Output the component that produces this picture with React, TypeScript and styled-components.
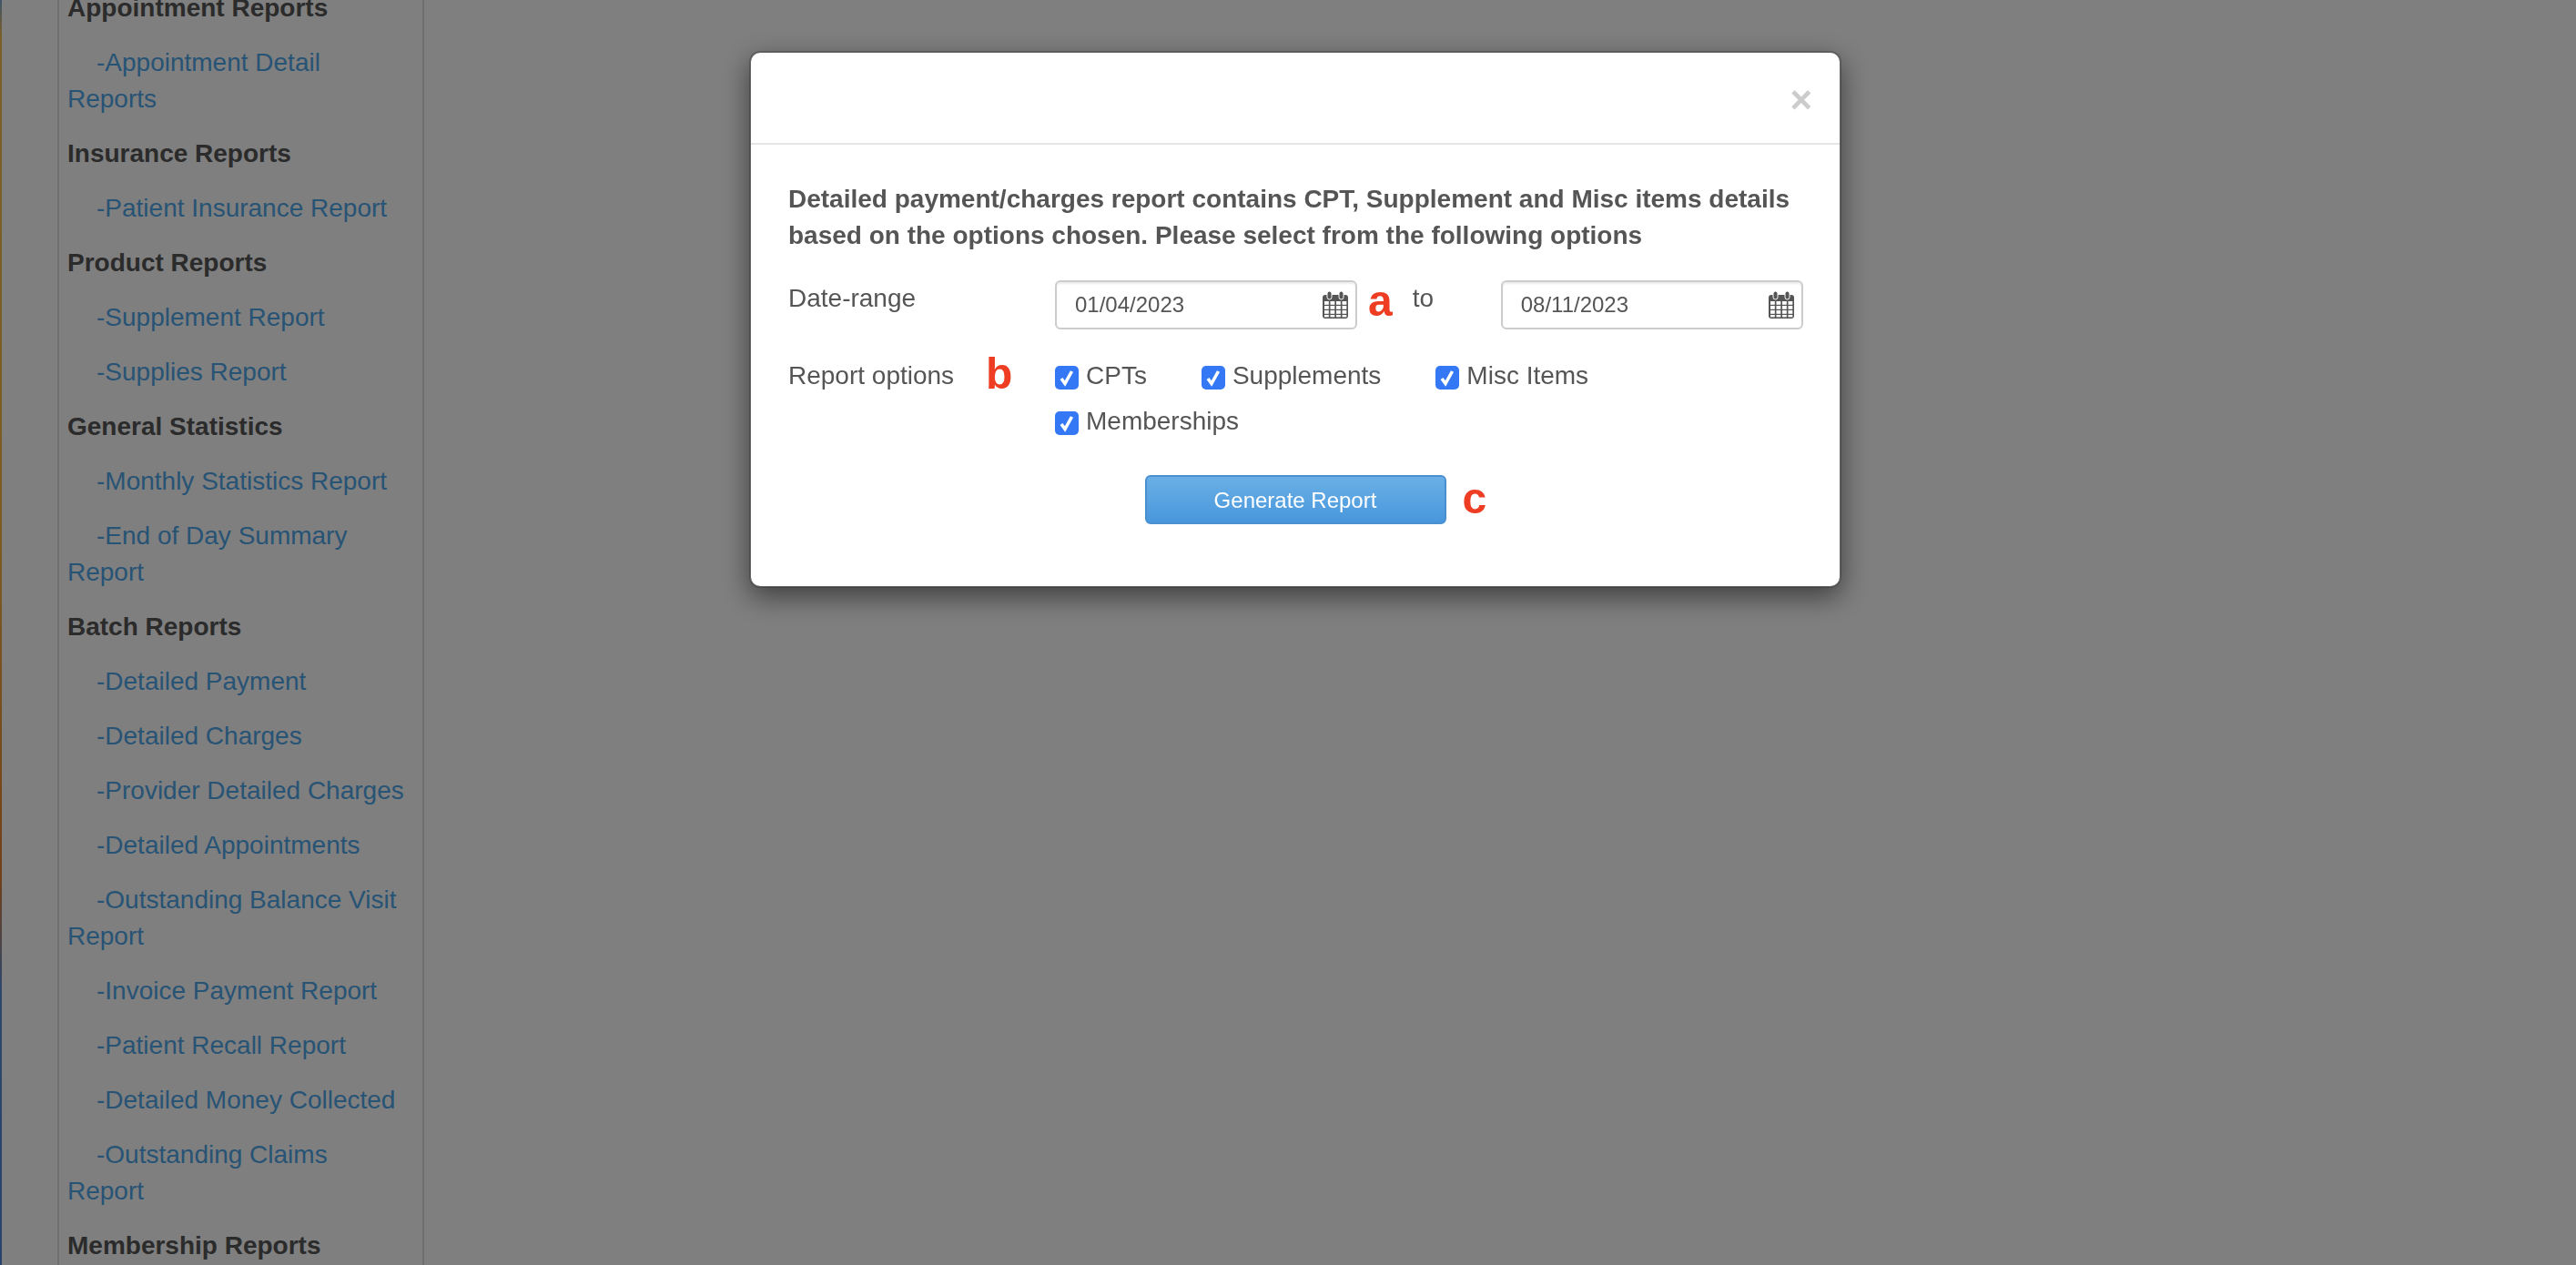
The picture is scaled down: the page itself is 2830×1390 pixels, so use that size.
import styled, { createGlobalStyle } from "styled-components";

const sections = [
  { title: "Appointment Reports", links: ["Appointment Detail Reports"] },
  { title: "Insurance Reports", links: ["Patient Insurance Report"] },
  { title: "Product Reports", links: ["Supplement Report", "Supplies Report"] },
  {
    title: "General Statistics",
    links: ["Monthly Statistics Report", "End of Day Summary Report"],
  },
  {
    title: "Batch Reports",
    links: [
      "Detailed Payment",
      "Detailed Charges",
      "Provider Detailed Charges",
      "Detailed Appointments",
      "Outstanding Balance Visit Report",
      "Invoice Payment Report",
      "Patient Recall Report",
      "Detailed Money Collected",
      "Outstanding Claims Report",
    ],
  },
  { title: "Membership Reports", links: [] },
];

const options = ["CPTs", "Supplements", "Misc Items", "Memberships"];

const GlobalStyle = createGlobalStyle`
  html, body {
    margin: 0;
    height: 100%;
    overflow: hidden;
    background: #fff;
    font-family: "Liberation Sans", Arial, sans-serif;
  }
  * { box-sizing: border-box; }
`;

const Page = styled.div`
  height: 1390px;
  overflow: hidden;
  padding-left: 63px;
`;

const Stripe = styled.div`
  position: fixed;
  left: 0;
  top: 0;
  bottom: 0;
  width: 2px;
  background: linear-gradient(
    to bottom,
    #7fa6d6 0,
    #f4c04e 40px,
    #f6b544 600px,
    #f09a3c 800px,
    #e77f2e 960px,
    #5b8fd8 1090px,
    #4f87d6 1390px
  );
`;

const Sidebar = styled.nav`
  width: 403px;
  min-height: 1420px;
  margin-top: -11px;
  padding: 0 18px 0 9px;
  border-left: 2px solid #dedede;
  border-right: 2px solid #dedede;
  font-size: 28px;
  line-height: 40px;
`;

const SectionTitle = styled.div`
  margin-bottom: 20px;
  font-weight: bold;
  color: #565656;
`;

const SideLink = styled.a`
  display: block;
  margin-bottom: 20px;
  text-indent: 32px;
  color: #4fa6ea;
  text-decoration: none;
`;

const Backdrop = styled.div`
  position: fixed;
  inset: 0;
  background: rgba(0, 0, 0, 0.5);
  padding-top: 56px;
`;

const Modal = styled.div`
  width: 1200px;
  margin-left: 823px;
  background: #fff;
  border: 2px solid rgba(0, 0, 0, 0.2);
  background-clip: padding-box;
  border-radius: 12px;
  box-shadow: 0 10px 30px rgba(0, 0, 0, 0.5);
  color: #555;
  font-size: 28px;
  line-height: 40px;
`;

const ModalHeader = styled.div`
  height: 101px;
  display: flex;
  justify-content: flex-end;
  align-items: center;
  padding-right: 30px;
  border-bottom: 2px solid #e5e5e5;
`;

const CloseButton = styled.span`
  font-size: 42px;
  font-weight: bold;
  line-height: 1;
  color: #cccccc;
  margin-top: 4px;
`;

const ModalBody = styled.div`
  padding: 40px 41px 68px;
`;

const Intro = styled.div`
  font-weight: bold;
  margin-bottom: 29px;
`;

const FormRow = styled.div`
  display: flex;
  align-items: flex-start;
  margin-bottom: 31px;
`;

const FieldLabel = styled.div`
  width: 293px;
  flex: none;
  display: flex;
`;

const DateField = styled.div`
  width: 332px;
  height: 54px;
  flex: none;
  display: flex;
  align-items: center;
  justify-content: space-between;
  padding: 0 8px 0 20px;
  border: 2px solid #ccc;
  border-radius: 6px;
  box-shadow: inset 0 2px 2px rgba(0, 0, 0, 0.075);
  font-size: 24px;
`;

const Marker = styled.span<{ $gap: number; $lift: number }>`
  font-size: 48px;
  line-height: 54px;
  font-weight: bold;
  color: #ee3d23;
  margin-left: ${(p) => p.$gap}px;
  margin-top: ${(p) => p.$lift}px;
`;

const ToLabel = styled.div`
  margin-left: 22px;
  width: 97px;
  flex: none;
`;

const OptionGroup = styled.div`
  display: flex;
  flex-wrap: wrap;
  column-gap: 60px;
  row-gap: 10px;
  width: 821px;
`;

const Option = styled.label`
  display: flex;
  align-items: flex-start;
  gap: 8px;
`;

const CheckBox = styled.span`
  width: 26px;
  height: 26px;
  margin-top: 9px;
  border-radius: 5px;
  background: #3478f6;
  display: flex;
  align-items: center;
  justify-content: center;
`;

const ButtonRow = styled.div`
  display: grid;
  grid-template-columns: 1fr 331px 1fr;
  align-items: center;
  margin-top: 39px;
`;

const GenerateButton = styled.button`
  grid-column: 2;
  height: 54px;
  padding: 2px 0 0;
  border: 2px solid #4a90d0;
  border-radius: 6px;
  background: linear-gradient(to bottom, #6ab0e6, #4896dc);
  color: #fff;
  font-family: inherit;
  font-size: 24px;
`;

function CalendarIcon() {
  return (
    <svg width="28" height="30" viewBox="0 0 28 30">
      <rect x="0" y="4" width="28" height="26" rx="3" fill="#555" />
      <rect x="5" y="0" width="5" height="9" rx="2.5" fill="#555" stroke="#fff" strokeWidth="1" />
      <rect x="18" y="0" width="5" height="9" rx="2.5" fill="#555" stroke="#fff" strokeWidth="1" />
      {[11, 16, 21].map((y) =>
        [2, 8.5, 15, 21.5].map((x) => (
          <rect key={`${x}-${y}`} x={x} y={y} width="4.8" height="3.8" fill="#fff" />
        ))
      )}
      {[2, 8.5, 15, 21.5].map((x) => (
        <rect key={x} x={x} y="26" width="4.8" height="2.4" fill="#fff" />
      ))}
    </svg>
  );
}

function CheckIcon() {
  return (
    <svg width="20" height="20" viewBox="0 0 20 20">
      <path d="M4 11 L8 16.5 L15.5 3" fill="none" stroke="#fff" strokeWidth="3.6" />
    </svg>
  );
}

export default function App() {
  return (
    <>
      <GlobalStyle />
      <Page>
        <Sidebar>
          {sections.map((section) => (
            <div key={section.title}>
              <SectionTitle>{section.title}</SectionTitle>
              {section.links.map((link) => (
                <SideLink key={link}>-{link}</SideLink>
              ))}
            </div>
          ))}
        </Sidebar>
      </Page>
      <Stripe />
      <Backdrop>
        <Modal>
          <ModalHeader>
            <CloseButton>×</CloseButton>
          </ModalHeader>
          <ModalBody>
            <Intro>
              Detailed payment/charges report contains CPT, Supplement and Misc items details
              <br />
              based on the options chosen. Please select from the following options
            </Intro>
            <FormRow>
              <FieldLabel>Date-range</FieldLabel>
              <DateField>
                01/04/2023
                <CalendarIcon />
              </DateField>
              <Marker $gap={12} $lift={-4}>
                a
              </Marker>
              <ToLabel>to</ToLabel>
              <DateField>
                08/11/2023
                <CalendarIcon />
              </DateField>
            </FormRow>
            <FormRow>
              <FieldLabel>
                Report options
                <Marker $gap={35} $lift={-9}>
                  b
                </Marker>
              </FieldLabel>
              <OptionGroup>
                {options.map((option) => (
                  <Option key={option}>
                    <CheckBox>
                      <CheckIcon />
                    </CheckBox>
                    {option}
                  </Option>
                ))}
              </OptionGroup>
            </FormRow>
            <ButtonRow>
              <GenerateButton>Generate Report</GenerateButton>
              <Marker $gap={18} $lift={-2}>
                c
              </Marker>
            </ButtonRow>
          </ModalBody>
        </Modal>
      </Backdrop>
    </>
  );
}
